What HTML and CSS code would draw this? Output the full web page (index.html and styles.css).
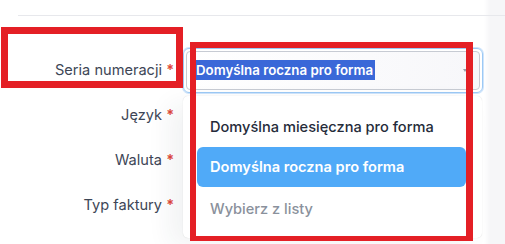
FILE: index.html
```html
<!DOCTYPE html>
<html lang="pl">
<head>
<meta charset="utf-8">
<link rel="stylesheet" href="styles.css">
</head>
<body>
<div class="page">
  <div class="rule"></div>
  <div class="form">
    <div class="row row-first">
      <label class="label">Seria numeracji <span class="req">*</span></label>
      <div class="field">
        <div class="select focused">
          <span class="value"><span class="sel">Domyślna roczna pro forma</span></span>
          <span class="caret"></span>
        </div>
        <div class="dropdown">
          <div class="opt">Domyślna miesięczna pro forma</div>
          <div class="opt active">Domyślna roczna pro forma</div>
          <div class="opt placeholder">Wybierz z listy</div>
        </div>
      </div>
    </div>
    <div class="row"><label class="label">Język <span class="req">*</span></label><div class="field"></div></div>
    <div class="row"><label class="label">Waluta <span class="req">*</span></label><div class="field"></div></div>
    <div class="row"><label class="label">Typ faktury <span class="req">*</span></label><div class="field"></div></div>
  </div>
  <div class="mark mark-label"></div>
  <div class="mark mark-field"></div>
</div>
</body>
</html>
```
FILE: styles.css
```css
html, body {
  margin: 0;
  padding: 0;
  background: #ffffff;
}
body {
  font-family: Inter, "Noto Sans", sans-serif;
  width: 505px;
  height: 244px;
  overflow: hidden;
  background: linear-gradient(to right, #ffffff 0, #ffffff 484px, #f6f6f8 490px, #f6f6f8 100%);
}
.page {
  position: relative;
  width: 505px;
  height: 244px;
}
.rule {
  margin-left: 18px;
  padding-top: 15px;
  border-bottom: 1px solid #e7e8ec;
}
.form {
  display: flex;
  flex-direction: column;
  padding-top: 32px;
}
.row {
  display: grid;
  grid-template-columns: 174px 300px;
  column-gap: 9px;
  align-items: center;
  height: 45px;
}
.row-first {
  height: 46px;
}
.label {
  text-align: right;
  font-size: 14.6px;
  color: #3d4656;
  white-space: nowrap;
  margin-top: -3px;
}
.req {
  color: #e0463a;
  font-weight: 600;
}
.field {
  position: relative;
  height: 100%;
}
.select {
  box-sizing: border-box;
  height: 45px;
  border: 1px solid #9cc9f5;
  border-radius: 6px;
  box-shadow: 0 0 0 1px #cfe4fb;
  padding: 2px;
  display: flex;
}
.select .value {
  flex: 1;
  display: flex;
  align-items: center;
  border: 1px solid #c7cbd3;
  border-radius: 4px;
  padding-left: 8px;
  background: linear-gradient(to right, #ffffff, #f7f7fa);
  position: relative;
}
.sel {
  background: #3a68d8;
  color: #ffffff;
  font-size: 13.3px;
  font-weight: 600;
  line-height: 20px;
  padding: 0 2px 0 1px;
  margin-top: -2px;
}
.caret {
  position: absolute;
  right: 16px;
  top: 21px;
  width: 0;
  height: 0;
  border-left: 2px solid transparent;
  border-right: 2px solid transparent;
  border-top: 3px solid #9aa0aa;
}
.dropdown {
  position: absolute;
  left: 0;
  top: 48px;
  width: 299px;
  box-sizing: border-box;
  height: 142px;
  background: #ffffff;
  border-radius: 5px;
  box-shadow: 0 0 1px rgba(0,0,0,0.18), -14px 8px 24px rgba(40,45,70,0.06);
  padding: 11px 16px 0 14px;
  display: flex;
  flex-direction: column;
  z-index: 2;
}
.opt {
  height: 40px;
  display: flex;
  align-items: center;
  padding-left: 13px;
  font-size: 14.6px;
  font-weight: 500;
  color: #252b3a;
  border-radius: 6px;
}
.opt.active {
  background: #50aaf8;
  color: #ffffff;
  font-weight: 600;
}
.opt.placeholder {
  color: #8a919c;
  height: 44px;
}
.mark {
  position: absolute;
  box-sizing: border-box;
  border: 7px solid #e41f25;
  z-index: 5;
}
.mark-label {
  left: 1px;
  top: 27px;
  width: 182px;
  height: 61px;
}
.mark-field {
  left: 190px;
  top: 42px;
  width: 283px;
  height: 199px;
  border-width: 6px 7px 5px 6px;
}
```
